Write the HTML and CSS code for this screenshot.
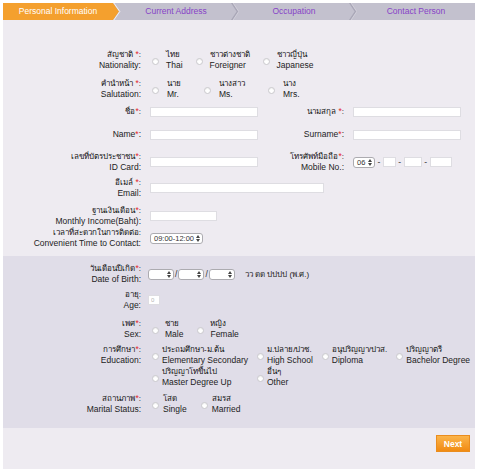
FILE: index.html
```html
<!DOCTYPE html>
<html lang="th">
<head>
<meta charset="utf-8">
<title>Personal Information</title>
<link rel="stylesheet" href="styles.css">
</head>
<body>
<div class="wizard">
  <nav class="steps">
    <div class="step active">
      <span class="step-text">Personal Information</span>
      <svg class="chev" viewBox="0 0 8 17" width="8" height="17"><rect width="8" height="17" fill="#c3c1ce"/><polygon points="0,0 6,8.5 0,17" fill="#f4a02e"/><polyline points="0.5,-0.5 6.8,8.5 0.5,17.5" fill="none" stroke="#f4f1f6" stroke-width="1"/></svg>
    </div>
    <div class="step">
      <span class="step-text">Current Address</span>
      <svg class="chev" viewBox="0 0 8 17" width="8" height="17"><polyline points="0.5,-0.5 6.5,8.5 0.5,17.5" fill="none" stroke="#a9a7b7" stroke-width="1.4"/><polyline points="1.8,-0.5 7.8,8.5 1.8,17.5" fill="none" stroke="#d4d2dc" stroke-width="0.8"/></svg>
    </div>
    <div class="step">
      <span class="step-text">Occupation</span>
      <svg class="chev" viewBox="0 0 8 17" width="8" height="17"><polyline points="0.5,-0.5 6.5,8.5 0.5,17.5" fill="none" stroke="#a9a7b7" stroke-width="1.4"/><polyline points="1.8,-0.5 7.8,8.5 1.8,17.5" fill="none" stroke="#d4d2dc" stroke-width="0.8"/></svg>
    </div>
    <div class="step last">
      <span class="step-text">Contact Person</span>
    </div>
  </nav>

  <form class="form">
    <section class="sec sec-a">
      <div class="row">
        <div class="lbl"><span class="th">สัญชาติ <span class="req">*</span>:</span><span>Nationality:</span></div>
        <div class="opts opts-nat">
          <label class="opt"><input type="radio" class="radio" name="nat"><span class="opt-text"><span class="th">ไทย</span><span>Thai</span></span></label>
          <label class="opt"><input type="radio" class="radio" name="nat"><span class="opt-text"><span class="th">ชาวต่างชาติ</span><span>Foreigner</span></span></label>
          <label class="opt"><input type="radio" class="radio" name="nat"><span class="opt-text"><span class="th">ชาวญี่ปุ่น</span><span>Japanese</span></span></label>
        </div>
      </div>

      <div class="row mt-7">
        <div class="lbl"><span class="th">คำนำหน้า <span class="req">*</span>:</span><span>Salutation:</span></div>
        <div class="opts opts-sal">
          <label class="opt"><input type="radio" class="radio" name="sal"><span class="opt-text"><span class="th">นาย</span><span>Mr.</span></span></label>
          <label class="opt"><input type="radio" class="radio" name="sal"><span class="opt-text"><span class="th">นางสาว</span><span>Ms.</span></span></label>
          <label class="opt"><input type="radio" class="radio" name="sal"><span class="opt-text"><span class="th">นาง</span><span>Mrs.</span></span></label>
        </div>
      </div>

      <div class="row mt-6">
        <div class="lbl"><span class="th">ชื่อ<span class="req">*</span>:</span></div>
        <input type="text" class="text-in">
        <div class="lbl lbl-r"><span class="th">นามสกุล <span class="req">*</span>:</span></div>
        <input type="text" class="text-in">
      </div>

      <div class="row mt-12">
        <div class="lbl"><span>Name<span class="req">*</span>:</span></div>
        <input type="text" class="text-in">
        <div class="lbl lbl-r"><span>Surname<span class="req">*</span>:</span></div>
        <input type="text" class="text-in">
      </div>

      <div class="row mt-11">
        <div class="lbl"><span class="th">เลขที่บัตรประชาชน<span class="req">*</span>:</span><span>ID Card:</span></div>
        <input type="text" class="text-in">
        <div class="lbl lbl-r"><span class="th">โทรศัพท์มือถือ<span class="req">*</span>:</span><span>Mobile No.:</span></div>
        <div class="phone">
          <span class="sel sel-code"><span>06</span><svg class="updown" viewBox="0 0 4 7" width="4" height="7"><polygon points="0,3 2,0 4,3" fill="#444"/><polygon points="0,4 2,7 4,4" fill="#444"/></svg></span>
          <span class="dash">-</span>
          <input type="text" class="text-in in-m1">
          <span class="dash">-</span>
          <input type="text" class="text-in in-m2">
          <span class="dash">-</span>
          <input type="text" class="text-in in-m3">
        </div>
      </div>

      <div class="row mt-4">
        <div class="lbl"><span class="th">อีเมล์ <span class="req">*</span>:</span><span>Email:</span></div>
        <input type="text" class="text-in in-email">
      </div>

      <div class="row mt-6">
        <div class="lbl"><span class="th">ฐานเงินเดือน<span class="req">*</span>:</span><span>Monthly Income(Baht):</span></div>
        <input type="text" class="text-in in-income">
      </div>

      <div class="row">
        <div class="lbl"><span class="th">เวลาที่สะดวกในการติดต่อ:</span><span>Convenient Time to Contact:</span></div>
        <span class="sel sel-time"><span>09:00-12:00</span><svg class="updown" viewBox="0 0 4 7" width="4" height="7"><polygon points="0,3 2,0 4,3" fill="#444"/><polygon points="0,4 2,7 4,4" fill="#444"/></svg></span>
      </div>
    </section>

    <section class="sec sec-b">
      <div class="row">
        <div class="lbl"><span class="th">วันเดือนปีเกิด<span class="req">*</span>:</span><span>Date of Birth:</span></div>
        <div class="dob">
          <span class="sel sel-dob"><span></span><svg class="updown" viewBox="0 0 4 7" width="4" height="7"><polygon points="0,3 2,0 4,3" fill="#444"/><polygon points="0,4 2,7 4,4" fill="#444"/></svg></span>
          <span class="slash">/</span>
          <span class="sel sel-dob"><span></span><svg class="updown" viewBox="0 0 4 7" width="4" height="7"><polygon points="0,3 2,0 4,3" fill="#444"/><polygon points="0,4 2,7 4,4" fill="#444"/></svg></span>
          <span class="slash">/</span>
          <span class="sel sel-dob"><span></span><svg class="updown" viewBox="0 0 4 7" width="4" height="7"><polygon points="0,3 2,0 4,3" fill="#444"/><polygon points="0,4 2,7 4,4" fill="#444"/></svg></span>
          <span class="dob-hint th">วว ดด ปปปป (พ.ศ.)</span>
        </div>
      </div>

      <div class="row mt-4">
        <div class="lbl"><span class="th">อายุ:</span><span>Age:</span></div>
        <input type="text" class="text-in in-age" placeholder="0">
      </div>

      <div class="row mt-7">
        <div class="lbl"><span class="th">เพศ<span class="req">*</span>:</span><span>Sex:</span></div>
        <div class="opts opts-sex">
          <label class="opt"><input type="radio" class="radio" name="sex"><span class="opt-text"><span class="th">ชาย</span><span>Male</span></span></label>
          <label class="opt"><input type="radio" class="radio" name="sex"><span class="opt-text"><span class="th">หญิง</span><span>Female</span></span></label>
        </div>
      </div>

      <div class="row row-top mt-4">
        <div class="lbl"><span class="th">การศึกษา<span class="req">*</span>:</span><span>Education:</span></div>
        <div class="edu">
          <label class="opt"><input type="radio" class="radio" name="edu"><span class="opt-text"><span class="th">ประถมศึกษา-ม.ต้น</span><span>Elementary Secondary</span></span></label>
          <label class="opt"><input type="radio" class="radio" name="edu"><span class="opt-text"><span class="th">ม.ปลาย/ปวช.</span><span>High School</span></span></label>
          <label class="opt"><input type="radio" class="radio" name="edu"><span class="opt-text"><span class="th">อนุปริญญา/ปวส.</span><span>Diploma</span></span></label>
          <label class="opt"><input type="radio" class="radio" name="edu"><span class="opt-text"><span class="th">ปริญญาตรี</span><span>Bachelor Degree</span></span></label>
          <label class="opt"><input type="radio" class="radio" name="edu"><span class="opt-text"><span class="th">ปริญญาโทขึ้นไป</span><span>Master Degree Up</span></span></label>
          <label class="opt"><input type="radio" class="radio" name="edu"><span class="opt-text"><span class="th">อื่นๆ</span><span>Other</span></span></label>
        </div>
      </div>

      <div class="row mt-5">
        <div class="lbl"><span class="th">สถานภาพ<span class="req">*</span>:</span><span>Marital Status:</span></div>
        <div class="opts opts-mar">
          <label class="opt"><input type="radio" class="radio" name="mar"><span class="opt-text"><span class="th">โสด</span><span>Single</span></span></label>
          <label class="opt"><input type="radio" class="radio" name="mar"><span class="opt-text"><span class="th">สมรส</span><span>Married</span></span></label>
        </div>
      </div>
    </section>

    <div class="actions">
      <button type="button" class="next">Next</button>
    </div>
  </form>
</div>
</body>
</html>
```

FILE: styles.css
```css
* { box-sizing: border-box; }

body {
  margin: 0;
  background: #ffffff;
  font-family: "Liberation Sans", "Noto Sans", "DejaVu Sans", sans-serif;
  font-size: 8.5px;
  line-height: 11px;
  color: #222222;
}

.th { font-size: 8px; color: #111111; }
.th .req { font-size: 8.5px; }

.wizard {
  margin: 3px 5px 0 3px;
  min-height: 466px;
  background: #eeebf1;
  display: flex;
  flex-direction: column;
}

/* ---------- steps ---------- */
.steps {
  display: flex;
  height: 17px;
  background: #c3c1ce;
}
.step {
  flex: 1;
  display: flex;
  align-items: stretch;
}
.step-text {
  flex: 1;
  display: flex;
  align-items: center;
  justify-content: center;
  color: #8743c7;
}
.step.active { background: #f4a02e; }
.step.active .step-text { color: #ffffff; }
.chev { flex: none; display: block; }

/* ---------- form ---------- */
.form {
  flex: 1;
  display: flex;
  flex-direction: column;
}
.sec { display: flex; flex-direction: column; }
.sec-a { padding: 29px 0 7px; }
.sec-b { padding: 7px 0 13px; background: #e0dde8; }

.row {
  display: flex;
  align-items: center;
  gap: 9px;
}
.row-top { align-items: flex-start; }
.mt-4 { margin-top: 4px; }
.mt-5 { margin-top: 5px; }
.mt-6 { margin-top: 6px; }
.mt-7 { margin-top: 7px; }
.mt-11 { margin-top: 11px; }
.mt-12 { margin-top: 12px; }

.lbl {
  width: 138px;
  flex: none;
  display: flex;
  flex-direction: column;
  align-items: flex-end;
  text-align: right;
  white-space: nowrap;
}
.lbl-r { width: 77px; }
.req { color: #e3262b; }

/* radios */
.opts { display: flex; align-items: center; }
.opts-nat { gap: 11px; }
.opts-sal { gap: 21px; }
.opts-sex { gap: 12px; }
.opts-mar { gap: 12px; }

.opt {
  display: flex;
  align-items: center;
  gap: 6px;
  white-space: nowrap;
}
.opts-nat .opt { gap: 7px; }
.opts-sal .opt { gap: 8px; }
.opts-mar .opt { gap: 4px; }
.opt-text { display: flex; flex-direction: column; }

.radio {
  appearance: none;
  -webkit-appearance: none;
  margin: 2px 0 0 2px;
  width: 7px;
  height: 7px;
  border-radius: 50%;
  border: 1px solid #c9c8cc;
  background: #ffffff;
  box-shadow: inset 0 1px 1px rgba(0, 0, 0, 0.06);
  flex: none;
}

.edu {
  display: grid;
  grid-template-columns: repeat(4, auto);
  justify-content: start;
  column-gap: 7px;
}
.edu .opt { gap: 3px; }

/* text inputs */
.text-in {
  width: 108px;
  height: 10px;
  margin: 0;
  padding: 0 2px;
  border: 1px solid #dedde2;
  background: #ffffff;
  font: inherit;
  font-size: 6px;
  flex: none;
}
.in-email { width: 174px; }
.in-income { width: 67px; }
.in-m1 { width: 13px; }
.in-m2 { width: 18px; }
.in-m3 { width: 22px; }
.in-age { width: 12px; margin-left: -2px; }
.in-age::placeholder { color: #b5b5b5; }

/* fake selects */
.sel {
  display: inline-flex;
  align-items: center;
  justify-content: space-between;
  height: 11px;
  padding: 0 2px 0 3px;
  border: 1px solid #acabb0;
  border-radius: 3px;
  background: #ffffff;
  font-size: 7.5px;
  color: #333333;
  flex: none;
}
.sel-code { width: 22px; }
.sel-time { width: 53px; }
.sel-dob { width: 26px; }
.updown { display: block; flex: none; }

.phone {
  display: flex;
  align-items: center;
  gap: 2.5px;
}
.dash { color: #333333; }

.dob {
  display: flex;
  align-items: center;
  gap: 1px;
  margin-left: -2px;
}
.slash { color: #333333; }
.dob-hint { margin-left: 9px; color: #222222; }

/* actions */
.actions {
  display: flex;
  justify-content: flex-end;
  padding: 7px 5px 0 0;
}
.next {
  width: 34px;
  height: 17px;
  padding: 0;
  border: 1px solid #ea8d1e;
  background: linear-gradient(#fbb44a, #f18b13);
  color: #ffffff;
  font-family: inherit;
  font-size: 8.5px;
  font-weight: bold;
}
```
